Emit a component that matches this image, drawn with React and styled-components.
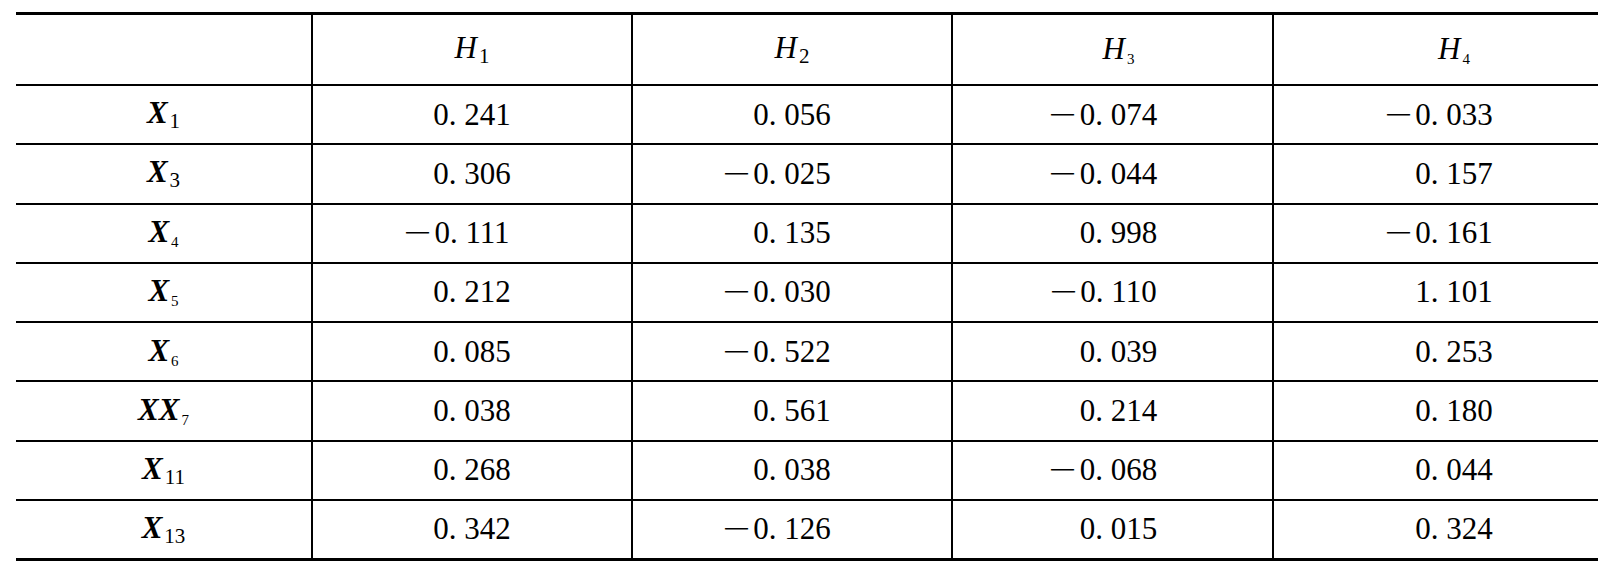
import React from 'react';
import styled, { createGlobalStyle } from 'styled-components';

const GlobalStyle = createGlobalStyle`
  body {
    margin: 0;
    background: #fff;
    color: #000;
    font-family: 'Liberation Serif', 'Times New Roman', serif;
  }
`;

const Page = styled.div`
  padding: 12px 0 0 16px;
`;

const Table = styled.div`
  display: grid;
  width: 1582px;
  grid-template-columns: 295px 320px 320px 321px 326px;
  grid-template-rows: 71px repeat(7, 59.25px) 57.25px;
  border-top: 3px solid #000;
  border-bottom: 3px solid #000;

  & > div:nth-child(5n + 1) {
    border-left: none;
  }
  & > div:nth-last-child(-n + 5) {
    border-bottom: none;
  }
`;

const Cell = styled.div`
  display: flex;
  align-items: center;
  justify-content: center;
  border-left: 2px solid #000;
  border-bottom: 2px solid #000;
  padding-left: ${({ $shift = 0 }) => $shift * 2}px;
  font-size: 31px;
  white-space: nowrap;
`;

const Label = styled.span`
  display: inline-block;
  line-height: 1;
`;

const Var = styled.span`
  font-style: italic;
  font-weight: ${({ $bold }) => ($bold ? 700 : 400)};
`;

const Sub = styled.sub`
  font-style: normal;
  font-weight: 400;
  font-size: ${({ $small }) => ($small ? '15px' : '21px')};
  line-height: 1;
  vertical-align: -5px;
  margin-left: 2px;
`;

const Num = styled.span`
  display: inline-flex;
  align-items: center;
`;

// zero-width slot so the minus hangs left of a centred number
const Sign = styled.span`
  display: inline-flex;
  justify-content: flex-end;
  width: 0;
`;

const Dash = styled.span`
  display: inline-block;
  transform: scaleX(1.6);
  transform-origin: right center;
  margin-right: 3px;
`;

const heads = [
  { sub: '1' },
  { sub: '2' },
  { sub: '3', small: true },
  { sub: '4', small: true },
];

const shifts = [0, 0, 6, 18];

const rows = [
  { name: 'X', sub: '1', values: [0.241, 0.056, -0.074, -0.033] },
  { name: 'X', sub: '3', values: [0.306, -0.025, -0.044, 0.157] },
  { name: 'X', sub: '4', small: true, values: [-0.111, 0.135, 0.998, -0.161] },
  { name: 'X', sub: '5', small: true, values: [0.212, -0.03, -0.11, 1.101] },
  { name: 'X', sub: '6', small: true, values: [0.085, -0.522, 0.039, 0.253] },
  { name: 'XX', sub: '7', small: true, values: [0.038, 0.561, 0.214, 0.18] },
  { name: 'X', sub: '11', values: [0.268, 0.038, -0.068, 0.044] },
  { name: 'X', sub: '13', values: [0.342, -0.126, 0.015, 0.324] },
];

const format = (v) => Math.abs(v).toFixed(3).replace('.', '. ');

const Value = ({ v }) => (
  <Num>
    {v < 0 && (
      <Sign>
        <Dash>−</Dash>
      </Sign>
    )}
    {format(v)}
  </Num>
);

const App = () => (
  <Page>
    <GlobalStyle />
    <Table>
      <Cell />
      {heads.map((h, i) => (
        <Cell key={h.sub} $shift={shifts[i]}>
          <Label>
            <Var>H</Var>
            <Sub $small={h.small}>{h.sub}</Sub>
          </Label>
        </Cell>
      ))}
      {rows.map((r) => (
        <React.Fragment key={r.name + r.sub}>
          <Cell>
            <Label>
              <Var $bold>{r.name}</Var>
              <Sub $small={r.small}>{r.sub}</Sub>
            </Label>
          </Cell>
          {r.values.map((v, i) => (
            <Cell key={i} $shift={shifts[i]}>
              <Value v={v} />
            </Cell>
          ))}
        </React.Fragment>
      ))}
    </Table>
  </Page>
);

export default App;
